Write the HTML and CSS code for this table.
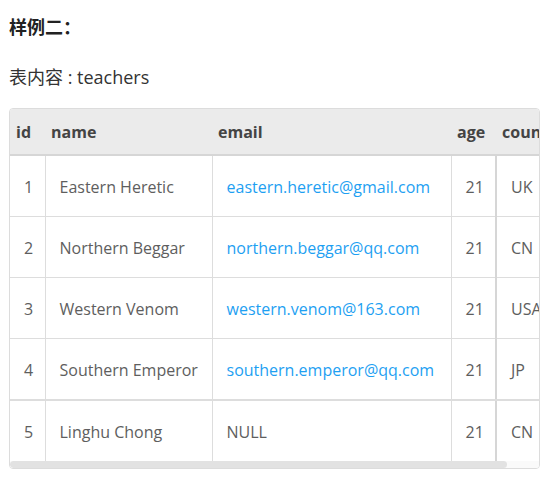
FILE: index.html
```html
<!DOCTYPE html>
<html lang="zh">
<head>
<meta charset="utf-8">
<title>样例二</title>
<link rel="stylesheet" href="styles.css">
</head>
<body>
<h4 class="title">样例二：</h4>
<p class="caption">表内容 : teachers</p>
<div class="table-wrap">
  <div class="table-scroll">
    <table class="data">
      <colgroup>
        <col class="c-id"><col class="c-name"><col class="c-email"><col class="c-age"><col class="c-country">
      </colgroup>
      <thead>
        <tr><th>id</th><th>name</th><th>email</th><th>age</th><th class="sep">country</th></tr>
      </thead>
      <tbody>
        <tr><td>1</td><td>Eastern Heretic</td><td><a href="#">eastern.heretic@gmail.com</a></td><td>21</td><td class="sep">UK</td></tr>
        <tr><td>2</td><td>Northern Beggar</td><td><a href="#">northern.beggar@qq.com</a></td><td>21</td><td class="sep">CN</td></tr>
        <tr><td>3</td><td>Western Venom</td><td><a href="#">western.venom@163.com</a></td><td>21</td><td class="sep">USA</td></tr>
        <tr class="thick"><td>4</td><td>Southern Emperor</td><td><a href="#">southern.emperor@qq.com</a></td><td>21</td><td class="sep">JP</td></tr>
        <tr><td>5</td><td>Linghu Chong</td><td>NULL</td><td>21</td><td class="sep">CN</td></tr>
      </tbody>
    </table>
  </div>
  <div class="scrollbar"><div class="thumb"></div></div>
</div>
</body>
</html>
```

FILE: styles.css
```css
html, body {
  margin: 0;
  padding: 0;
  background: #fff;
}
body {
  padding: 0 9px;
  font-family: "Open Sans", "Noto Sans CJK SC", sans-serif;
  color: #333;
}
.title {
  margin: 13px 0 0;
  font-size: 18px;
  line-height: 28px;
  font-weight: bold;
  color: #222;
}
.caption {
  margin: 22px 0 0;
  font-size: 18px;
  line-height: 28px;
  color: #333;
}
.table-wrap {
  margin-top: 17px;
  width: 531px;
  box-sizing: border-box;
  border: 1px solid #dcdcdc;
  border-radius: 4px;
  overflow: hidden;
}
.table-scroll {
  overflow: hidden;
}
.scrollbar {
  height: 7px;
  background: #fafafa;
}
.thumb {
  width: 497px;
  height: 7px;
  background: #e2e2e2;
  border-radius: 4px;
}
.data {
  border-collapse: collapse;
  table-layout: fixed;
  width: 563px;
  font-size: 16px;
  white-space: nowrap;
}
.c-id { width: 35px; }
.c-name { width: 167px; }
.c-email { width: 239px; }
.c-age { width: 45px; }
.c-country { width: 77px; }
.data th {
  background: #ebebeb;
  color: #444;
  font-weight: bold;
  text-align: left;
  height: 45px;
  padding: 0 6px;
  border-bottom: 2px solid #d6d6d6;
  overflow: hidden;
}
.data td {
  height: 59px;
  padding: 1px 14px 0;
  color: #5e5e5e;
  border: 1px solid #dddddd;
  overflow: hidden;
}
.data tbody tr:first-child td { border-top: none; }
.data tbody tr:last-child td { border-bottom: none; }
.data td:first-child { border-left: none; }
.data td.sep { border-left: 2px solid #d6d6d6; border-right: none; }
.data tr.thick td { border-bottom: 2px solid #dddddd; }
.data a {
  color: #1e9ff2;
  text-decoration: none;
}
```
